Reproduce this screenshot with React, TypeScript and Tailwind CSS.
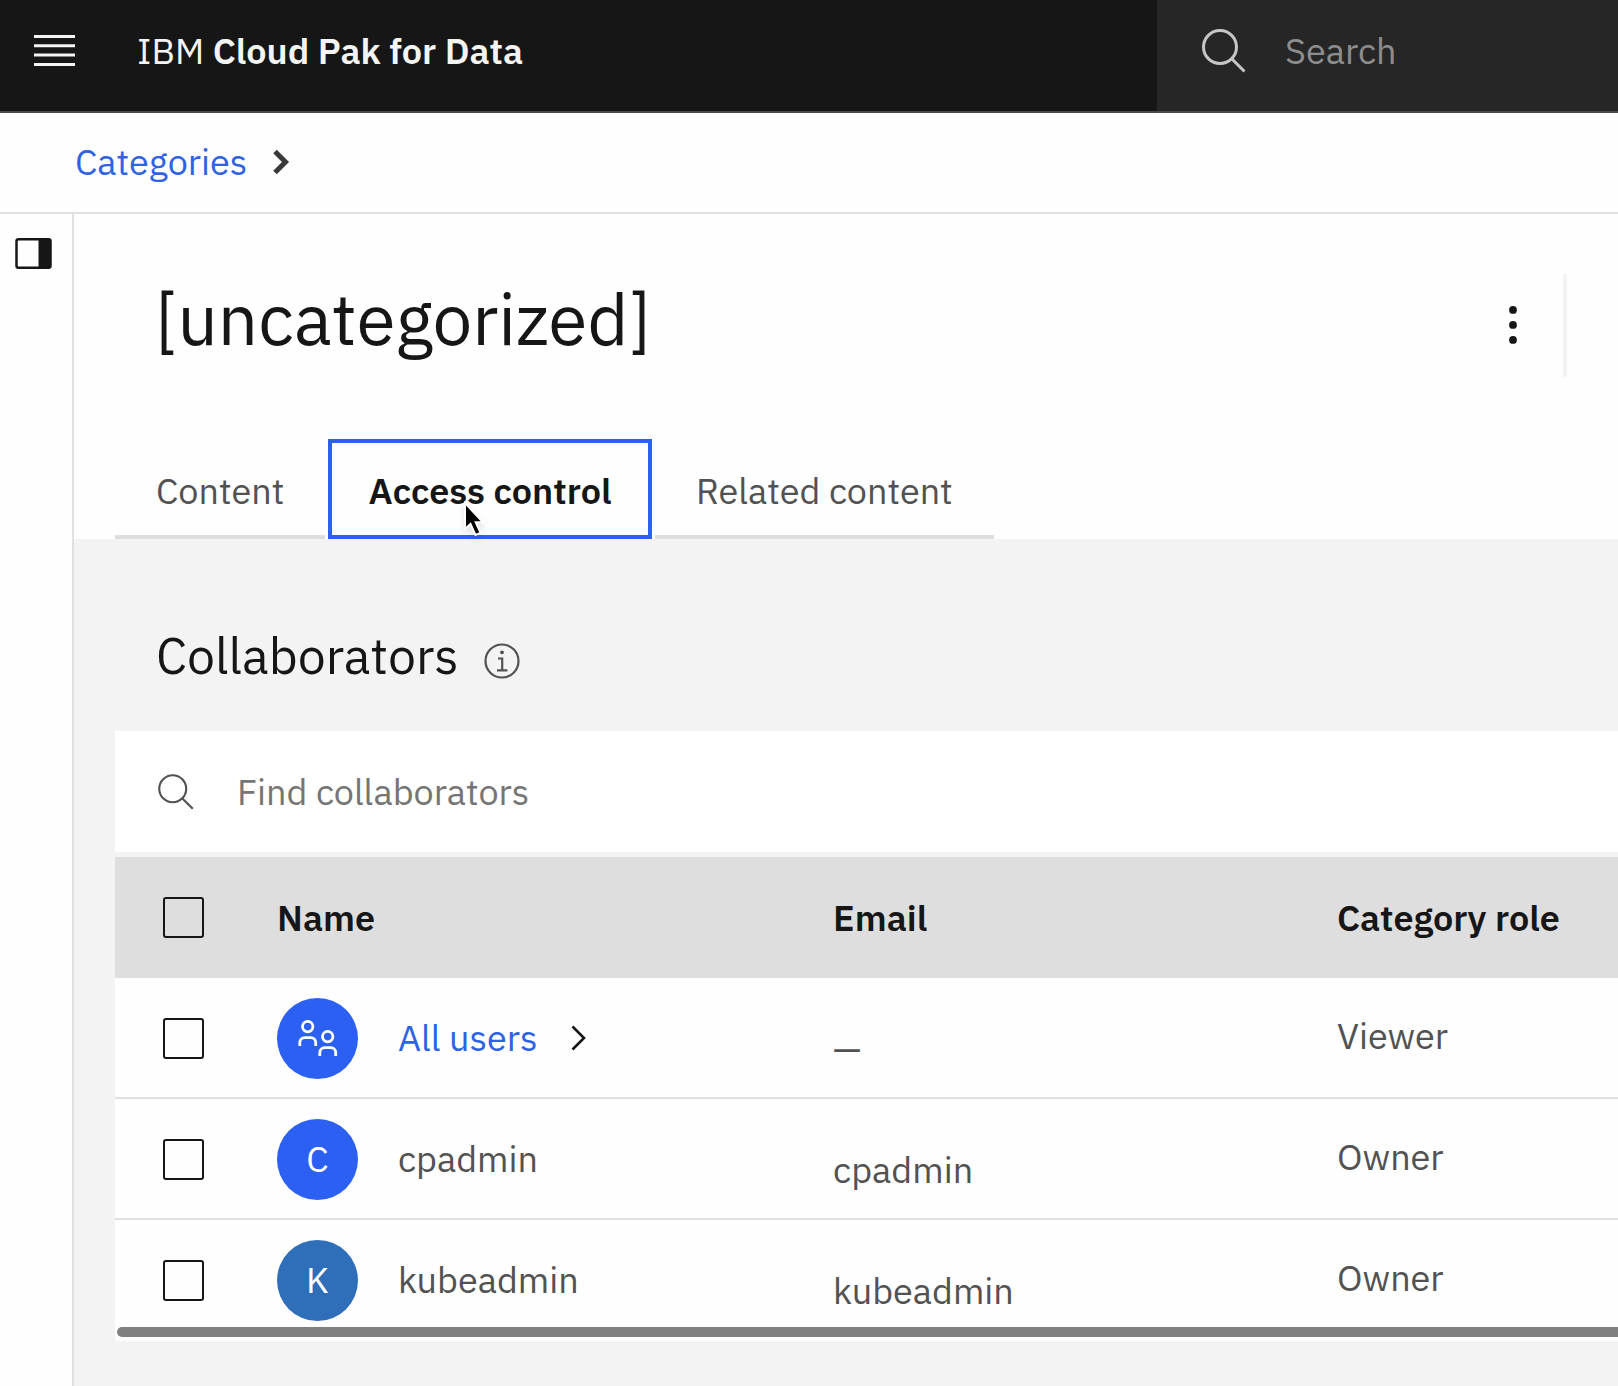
import React from "react";

function SearchIcon({ className, weight }: { className: string; weight: number }) {
  return (
    <svg viewBox="0 0 44 44" className={className} fill="none" stroke="currentColor" strokeWidth={weight} aria-hidden="true">
      <circle cx="18" cy="18" r="16.5" />
      <path d="M29.5 29.5 42.5 42.5" />
    </svg>
  );
}

function Checkbox({ label }: { label: string }) {
  return (
    <input
      type="checkbox"
      aria-label={label}
      className="block size-[41px] appearance-none rounded-[3px] border-2 border-[#161616] checked:bg-[#161616]"
    />
  );
}

function GroupIcon() {
  return (
    <svg viewBox="0 0 40 38" className="h-[38px] w-10" fill="none" stroke="white" strokeWidth="2.8" aria-hidden="true">
      <circle cx="9.7" cy="7.6" r="5.2" />
      <path d="M1.8 27v-3.4a5 5 0 0 1 5-5h5.9a5 5 0 0 1 5 5V27" />
      <circle cx="29.7" cy="17.6" r="5.2" />
      <path d="M21.8 37v-3.4a5 5 0 0 1 5-5h5.9a5 5 0 0 1 5 5V37" />
    </svg>
  );
}

const people = [
  { name: "All users", email: "—", role: "Viewer", group: true, color: "bg-[#2b60f3]" },
  { name: "cpadmin", email: "cpadmin", role: "Owner", group: false, color: "bg-[#2b60f3]" },
  { name: "kubeadmin", email: "kubeadmin", role: "Owner", group: false, color: "bg-[#2f6fba]" },
];

export default function App() {
  return (
    <div className="flex min-h-screen flex-col overflow-x-hidden bg-[#fefefe] font-['IBM_Plex_Sans','Noto_Sans',sans-serif] text-[36px] leading-[48px] text-[#525252]">
      <header className="flex h-[113px] border-b-2 border-[#4a4a4a] bg-[#161616] text-[#f4f4f4]">
        <div className="flex grow items-center pb-[10px] pl-[34px]">
          <button type="button" aria-label="Open menu" className="mr-[62px]">
            <svg viewBox="0 0 41 32" className="h-8 w-[41px]" fill="currentColor" aria-hidden="true">
              <path d="M0 0h41v3H0zM0 9.3h41v3H0zM0 18.6h41v3H0zM0 28h41v3H0z" />
            </svg>
          </button>
          <a href="#home">
            IBM <span className="font-semibold">Cloud Pak for Data</span>
          </a>
        </div>
        <label className="flex w-[461px] items-center bg-[#262626] pb-[10px] pl-[45px]">
          <SearchIcon className="size-11 shrink-0 text-[#c6c6c6]" weight={3} />
          <input
            type="text"
            aria-label="Search"
            placeholder="Search"
            className="ml-[39px] w-full min-w-0 bg-transparent outline-none placeholder:text-[#8d8d8d]"
          />
        </label>
      </header>

      <nav aria-label="Breadcrumb" className="flex h-[101px] items-center gap-[26px] border-b-2 border-[#e0e0e0] pb-[2px] pl-[75px]">
        <a href="#categories" className="text-[#2f63e3]">Categories</a>
        <svg viewBox="0 0 17 26" className="h-[26px] w-[17px]" fill="none" stroke="#393939" strokeWidth="5" aria-hidden="true">
          <path d="M2 2.5 12.5 13 2 23.5" />
        </svg>
      </nav>

      <div className="flex grow">
        <aside className="w-[74px] shrink-0 border-r-2 border-[#e0e0e0] pt-6 pl-[15px]">
          <button type="button" aria-label="Toggle side panel" className="block">
            <svg viewBox="0 0 37 32" className="h-8 w-[37px]" aria-hidden="true">
              <rect x="1.5" y="1.25" width="34" height="28.5" rx="2" fill="none" stroke="#161616" strokeWidth="2.5" />
              <path d="M23.5 1H35v29H23.5z" fill="#161616" />
            </svg>
          </button>
        </aside>

        <main className="flex min-w-0 grow flex-col">
          <div className="flex items-start justify-between pt-[60px] pl-[81px] pr-[51px]">
            <h1 className="text-[71px] leading-[90px] text-[#161616]">[uncategorized]</h1>
            <div className="flex h-[103px] items-center border-r-4 border-[#f3f3f3] pr-[45px]">
              <button type="button" aria-label="More actions">
                <svg viewBox="0 0 10 40" className="h-10 w-[10px]" fill="#161616" aria-hidden="true">
                  <circle cx="5" cy="3.9" r="3.9" />
                  <circle cx="5" cy="18.9" r="3.9" />
                  <circle cx="5" cy="33.9" r="3.9" />
                </svg>
              </button>
            </div>
          </div>

          <div role="tablist" className="mt-[62px] flex h-[100px] items-stretch gap-[3px] pl-[41px]">
            <button type="button" role="tab" aria-selected="false" className="w-[210px] border-b-4 border-[#dedede] pt-2 pl-[41px] text-left">
              Content
            </button>
            <button type="button" role="tab" aria-selected="true" className="relative w-[324px] border-4 border-[#2b61ee] pt-1 font-semibold text-[#161616]">
              Access control
              <svg viewBox="0 0 24 36" className="absolute top-[58px] left-[131px] h-9 w-6 drop-shadow-md" aria-hidden="true">
                <path d="M2 2v26l5.5-5 5 11 5-2.2-4.8-10.6H20z" fill="#000" stroke="#fff" strokeWidth="2" />
              </svg>
            </button>
            <button type="button" role="tab" aria-selected="false" className="w-[339px] border-b-4 border-[#dedede] pt-2 pl-[41px] text-left">
              Related content
            </button>
          </div>

          <section className="grow bg-[#f3f3f3] pt-[81px] pb-11 pl-[41px]">
            <div className="flex items-center gap-[25px] pl-[41px]">
              <h2 className="text-[50px] leading-[72px] text-[#161616]">Collaborators</h2>
              <button type="button" aria-label="About collaborators" className="mt-[9px]">
                <svg viewBox="0 0 36 36" className="size-9" fill="none" stroke="#525252" strokeWidth="2.2" aria-hidden="true">
                  <circle cx="18" cy="18" r="16.5" />
                  <circle cx="18" cy="9.3" r="1.9" fill="#525252" stroke="none" />
                  <path d="M14 15.5h4.2v11.7M13 27.3h10.4" />
                </svg>
              </button>
            </div>

            <label className="mt-[39px] flex h-[121px] items-center bg-white pl-[43px]">
              <SearchIcon className="size-9 shrink-0 text-[#525252]" weight={2.6} />
              <input
                type="text"
                aria-label="Find collaborators"
                placeholder="Find collaborators"
                className="ml-[43px] w-full min-w-0 bg-transparent outline-none placeholder:text-[#757575]"
              />
            </label>

            <div className="relative mt-[5px] overflow-hidden bg-[#fefefe]">
              <table className="w-full table-fixed border-separate border-spacing-0 text-left">
                <colgroup>
                  <col className="w-[162px]" />
                  <col className="w-[37%]" />
                  <col />
                  <col className="w-[281px]" />
                </colgroup>
                <thead>
                  <tr className="h-[121px] bg-[#dedede] text-[#161616]">
                    <th className="pl-12"><Checkbox label="Select all collaborators" /></th>
                    <th className="font-semibold">Name</th>
                    <th className="font-semibold">Email</th>
                    <th className="font-semibold whitespace-nowrap">Category role</th>
                  </tr>
                </thead>
                <tbody className="[&_td]:h-[121px] [&_td]:border-b-2 [&_td]:border-[#e0e0e0] [&_tr:last-child_td]:border-transparent">
                  {people.map((p) => (
                    <tr key={p.name}>
                      <td className="pt-px pl-12"><Checkbox label={`Select ${p.name}`} /></td>
                      <td className="pt-px">
                        <div className="flex items-center">
                          <span className={`mr-10 flex size-[81px] shrink-0 items-center justify-center rounded-full text-white ${p.color}`}>
                            {p.group ? <GroupIcon /> : p.name[0].toUpperCase()}
                          </span>
                          {p.group ? (
                            <a href="#all-users" className="flex items-center gap-[34px] text-[#2f63e3]">
                              {p.name}
                              <svg viewBox="0 0 16 26" className="h-[26px] w-4" fill="none" stroke="#161616" strokeWidth="2.6" aria-hidden="true">
                                <path d="M1.5 1.5 13 13 1.5 24.5" />
                              </svg>
                            </a>
                          ) : (
                            <span>{p.name}</span>
                          )}
                        </div>
                      </td>
                      <td className="pt-[22px]">{p.email}</td>
                      <td className="pb-1">{p.role}</td>
                    </tr>
                  ))}
                </tbody>
              </table>
              <div className="absolute right-0 bottom-1 left-[2px] h-[10px] rounded-l-full bg-[#808080]" />
            </div>
          </section>
        </main>
      </div>
    </div>
  );
}
